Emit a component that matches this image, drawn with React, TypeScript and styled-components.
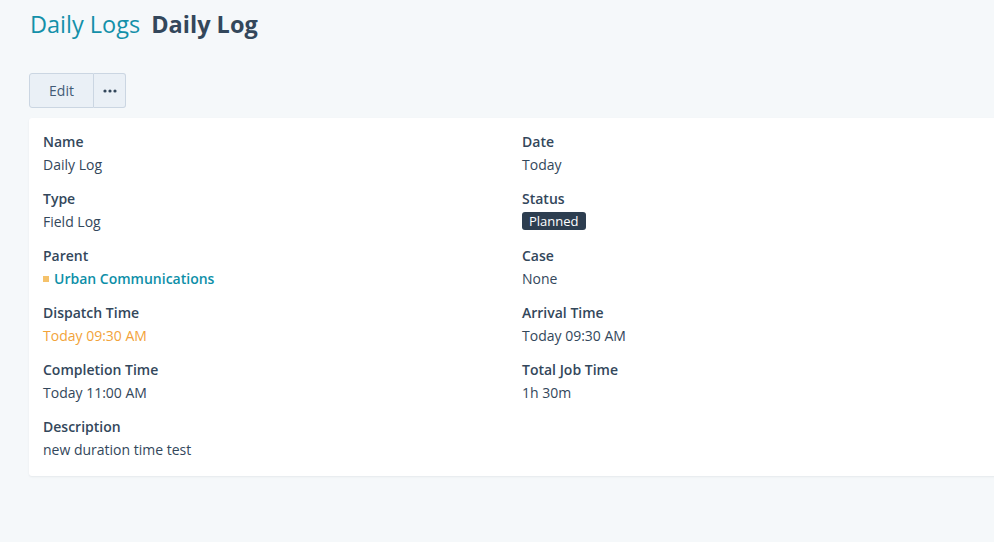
import * as React from 'react';
import styled, { createGlobalStyle } from 'styled-components';

const GlobalStyle = createGlobalStyle`
  html, body {
    margin: 0;
    padding: 0;
    background: #f5f8fa;
    overflow: hidden;
  }
  body {
    font-family: 'Open Sans', 'Noto Sans', sans-serif;
    color: #33475b;
  }
`;

const Page = styled.div`
  width: 994px;
  height: 542px;
  padding: 9px 0 0 29px;
  box-sizing: border-box;
`;

const Breadcrumb = styled.h1`
  display: flex;
  gap: 11px;
  align-items: baseline;
  margin: 0;
  font-size: 23.5px;
  line-height: 30px;
  font-weight: 400;
`;

const CrumbLink = styled.a`
  color: #1390a9;
  text-decoration: none;
  padding-left: 1px;
`;

const CrumbCurrent = styled.span`
  color: #33475b;
  font-weight: 700;
`;

const Toolbar = styled.div`
  display: flex;
  margin-top: 34px;
`;

const ToolButton = styled.button<{ $wide?: boolean }>`
  height: 35px;
  width: ${({ $wide }) => ($wide ? '65px' : '32px')};
  display: flex;
  align-items: center;
  justify-content: center;
  background: #eaf0f6;
  border: 1px solid #cbd6e2;
  color: #425b76;
  font-family: inherit;
  font-size: 14px;
  padding: 0;
  border-radius: ${({ $wide }) => ($wide ? '3px 0 0 3px' : '0 3px 3px 0')};
  ${({ $wide }) => (!$wide ? 'border-left: none;' : '')}
`;

const Card = styled.section`
  margin-top: 10px;
  width: 1000px;
  background: #fff;
  border-radius: 3px;
  box-shadow: 0 1px 2px rgba(45, 62, 80, 0.08);
  padding: 12px 14px 15px;
  box-sizing: border-box;
  display: grid;
  grid-template-columns: 479px 479px;
  row-gap: 11px;
`;

const Field = styled.div`
  display: flex;
  flex-direction: column;
`;

const Label = styled.div`
  font-size: 14px;
  line-height: 23px;
  font-weight: 600;
  color: #33475b;
`;

const Value = styled.div<{ $tone?: 'warn' | 'link' }>`
  font-size: 14px;
  line-height: 23px;
  display: flex;
  align-items: center;
  gap: 5px;
  color: ${({ $tone }) => ($tone === 'warn' ? '#f2a33a' : $tone === 'link' ? '#0d8fa8' : '#33475b')};
  font-weight: ${({ $tone }) => ($tone === 'link' ? 600 : 400)};
`;

const Square = styled.span`
  width: 6px;
  height: 6px;
  background: #f5c26b;
  display: inline-block;
`;

const Badge = styled.span`
  background: #2d3e50;
  color: #fff;
  font-size: 13px;
  line-height: 18px;
  padding: 0 7px;
  border-radius: 3px;
  margin-top: 2px;
`;

const fields: { label: string; value: React.ReactNode; tone?: 'warn' | 'link' }[] = [
  { label: 'Name', value: 'Daily Log' },
  { label: 'Date', value: 'Today' },
  { label: 'Type', value: 'Field Log' },
  { label: 'Status', value: <Badge>Planned</Badge> },
  { label: 'Parent', value: <><Square />Urban Communications</>, tone: 'link' },
  { label: 'Case', value: 'None' },
  { label: 'Dispatch Time', value: 'Today 09:30 AM', tone: 'warn' },
  { label: 'Arrival Time', value: 'Today 09:30 AM' },
  { label: 'Completion Time', value: 'Today 11:00 AM' },
  { label: 'Total Job Time', value: '1h 30m' },
  { label: 'Description', value: 'new duration time test' },
];

export default function App() {
  return (
    <>
      <GlobalStyle />
      <Page>
        <Breadcrumb>
          <CrumbLink href="#">Daily Logs</CrumbLink>
          <CrumbCurrent>Daily Log</CrumbCurrent>
        </Breadcrumb>
        <Toolbar>
          <ToolButton $wide>Edit</ToolButton>
          <ToolButton>
            <svg width="14" height="4" viewBox="0 0 14 4">
              <circle cx="2" cy="2" r="1.6" fill="#33475b" />
              <circle cx="7" cy="2" r="1.6" fill="#33475b" />
              <circle cx="12" cy="2" r="1.6" fill="#33475b" />
            </svg>
          </ToolButton>
        </Toolbar>
        <Card>
          {fields.map((f) => (
            <Field key={f.label}>
              <Label>{f.label}</Label>
              <Value $tone={f.tone}>{f.value}</Value>
            </Field>
          ))}
        </Card>
      </Page>
    </>
  );
}
